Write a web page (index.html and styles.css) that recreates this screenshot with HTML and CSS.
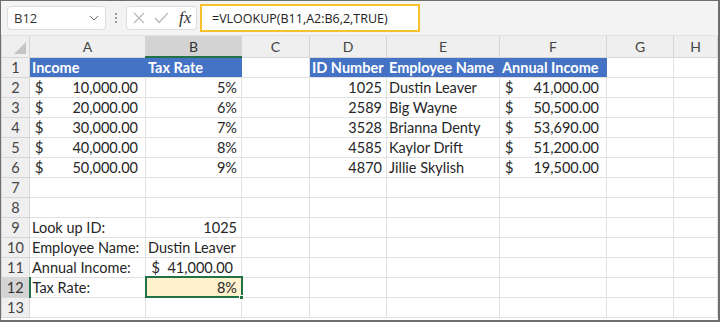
FILE: index.html
```html
<!DOCTYPE html>
<html lang="en">

<head>
    <meta charset="UTF-8">
    <title>VLOOKUP Tax Rate</title>
    <link rel="stylesheet" href="styles.css">
</head>

<body>
    <div class="window">
        <div class="toolbar">
            <div class="name-box">
                <span>B12</span>
                <svg class="chevron" width="10" height="6" viewBox="0 0 10 6">
                    <polyline points="1,1 5,5 9,1" fill="none" stroke="#666" stroke-width="1"/>
                </svg>
            </div>
            <div class="grip"><i></i><i></i><i></i></div>
            <div class="fn-box">
                <svg width="12" height="12" viewBox="0 0 12 12">
                    <path d="M1 1 L11 11 M11 1 L1 11" stroke="#b8b8b8" stroke-width="1.2"/>
                </svg>
                <svg width="15" height="12" viewBox="0 0 15 12">
                    <polyline points="1,6 5,10.5 14,1" fill="none" stroke="#b8b8b8" stroke-width="1.2"/>
                </svg>
                <span class="fx">fx</span>
            </div>
            <div class="formula-bar">
                <span class="formula">=VLOOKUP(B11,A2:B6,2,TRUE)</span>
            </div>
        </div>

        <table class="sheet">
            <colgroup>
                <col style="width:28px">
                <col style="width:116px">
                <col style="width:96px">
                <col style="width:68px">
                <col style="width:77px">
                <col style="width:113px">
                <col style="width:107px">
                <col style="width:67px">
                <col>
            </colgroup>
            <tr class="col-heads">
                <th class="corner"><span class="tri"></span></th>
                <th>A</th><th class="sel-col">B</th><th>C</th><th>D</th><th>E</th><th>F</th><th>G</th><th>H</th>
            </tr>
            <tr>
                <th>1</th>
                <td class="hd">Income</td><td class="hd">Tax Rate</td><td></td>
                <td class="hd">ID Number</td><td class="hd">Employee Name</td><td class="hd">Annual Income</td><td></td><td></td>
            </tr>
            <tr>
                <th>2</th>
                <td><div class="acct"><span>$</span><span>10,000.00</span></div></td><td class="num">5%</td><td></td>
                <td class="num">1025</td><td>Dustin Leaver</td><td><div class="acct"><span>$</span><span>41,000.00</span></div></td><td></td><td></td>
            </tr>
            <tr>
                <th>3</th>
                <td><div class="acct"><span>$</span><span>20,000.00</span></div></td><td class="num">6%</td><td></td>
                <td class="num">2589</td><td>Big Wayne</td><td><div class="acct"><span>$</span><span>50,500.00</span></div></td><td></td><td></td>
            </tr>
            <tr>
                <th>4</th>
                <td><div class="acct"><span>$</span><span>30,000.00</span></div></td><td class="num">7%</td><td></td>
                <td class="num">3528</td><td>Brianna Denty</td><td><div class="acct"><span>$</span><span>53,690.00</span></div></td><td></td><td></td>
            </tr>
            <tr>
                <th>5</th>
                <td><div class="acct"><span>$</span><span>40,000.00</span></div></td><td class="num">8%</td><td></td>
                <td class="num">4585</td><td>Kaylor Drift</td><td><div class="acct"><span>$</span><span>51,200.00</span></div></td><td></td><td></td>
            </tr>
            <tr>
                <th>6</th>
                <td><div class="acct"><span>$</span><span>50,000.00</span></div></td><td class="num">9%</td><td></td>
                <td class="num">4870</td><td>Jillie Skylish</td><td><div class="acct"><span>$</span><span>19,500.00</span></div></td><td></td><td></td>
            </tr>
            <tr>
                <th>7</th>
                <td></td><td></td><td></td><td></td><td></td><td></td><td></td><td></td>
            </tr>
            <tr>
                <th>8</th>
                <td></td><td></td><td></td><td></td><td></td><td></td><td></td><td></td>
            </tr>
            <tr>
                <th>9</th>
                <td>Look up ID:</td><td class="num">1025</td><td></td><td></td><td></td><td></td><td></td><td></td>
            </tr>
            <tr>
                <th>10</th>
                <td>Employee Name:</td><td>Dustin Leaver</td><td></td><td></td><td></td><td></td><td></td><td></td>
            </tr>
            <tr>
                <th>11</th>
                <td>Annual Income:</td><td class="num money">$&nbsp; 41,000.00</td><td></td><td></td><td></td><td></td><td></td><td></td>
            </tr>
            <tr>
                <th class="sel-row">12</th>
                <td>Tax Rate:</td><td class="num active">8%<span class="handle"></span></td><td></td><td></td><td></td><td></td><td></td><td></td>
            </tr>
            <tr>
                <th>13</th>
                <td></td><td></td><td></td><td></td><td></td><td></td><td></td><td></td>
            </tr>
        </table>
    </div>
</body>

</html>
```

FILE: styles.css
```css
* {
    margin: 0;
    padding: 0;
    box-sizing: border-box;
}

body {
    font-family: 'Lato', sans-serif;
    background: white;
    color: #262626;
}

.window {
    width: 720px;
    height: 322px;
    border: 2px solid #6f6f6f;
    border-top-width: 1px;
    border-left-width: 1px;
    overflow: hidden;
    background: white;
}

/* Toolbar */
.toolbar {
    height: 35px;
    background: #f3f3f3;
    display: flex;
    align-items: center;
    padding: 0 4px 0 6px;
    border-bottom: 1px solid #e2e2e2;
}

.name-box {
    width: 99px;
    height: 24px;
    background: white;
    border: 1px solid #dcdcdc;
    border-radius: 4px;
    display: flex;
    align-items: center;
    justify-content: space-between;
    padding: 0 6px 0 6px;
    font-family: 'Open Sans', sans-serif;
    font-size: 13px;
    color: #333;
}

.grip {
    width: 20px;
    display: flex;
    flex-direction: column;
    align-items: center;
    gap: 2px;
}

.grip i {
    width: 2px;
    height: 2px;
    background: #9a9a9a;
}

.fn-box {
    width: 71px;
    height: 24px;
    background: white;
    border: 1px solid #dcdcdc;
    border-radius: 4px;
    display: flex;
    align-items: center;
    gap: 9px;
    padding-left: 6px;
}

.fx {
    font-family: 'Liberation Serif', serif;
    font-style: italic;
    font-size: 17px;
    color: #333;
    margin-left: 1px;
}

.formula-bar {
    flex: 1;
    margin-left: 3px;
    height: 28px;
    display: flex;
    align-items: center;
}

.formula {
    width: 220px;
    height: 28px;
    border: 2px solid #f5c12e;
    background: white;
    padding-left: 10px;
    display: flex;
    align-items: center;
    font-family: 'Open Sans', sans-serif;
    font-size: 12.5px;
    color: #222;
}

/* Sheet */
.sheet {
    border-collapse: collapse;
    table-layout: fixed;
    width: 717px;
    font-size: 14.5px;
}

.sheet td,
.sheet th {
    height: 20px;
    border: 1px solid #e1e1e1;
    padding: 0 4px 0 2px;
    white-space: nowrap;
    overflow: visible;
    font-weight: normal;
}

.sheet tr:first-child th {
    border-top: none;
}

.sheet th {
    background: #efefef;
    color: #444;
    text-align: center;
    border-color: #d6d6d6;
    padding: 0;
}

.col-heads th {
    height: 21px;
    font-size: 14px;
    color: #444;
}

.corner {
    position: relative;
}

.corner .tri {
    position: absolute;
    right: 3px;
    bottom: 3px;
    width: 0;
    height: 0;
    border-left: 12px solid transparent;
    border-bottom: 12px solid #c4c4c4;
}

.sheet th.sel-col {
    background: #d3d3d3;
    border-bottom: 2px solid #217346;
    color: #333;
}

.sheet th.sel-row {
    background: #d3d3d3;
    border-right: 2px solid #217346;
    color: #333;
}

.sheet td.hd {
    background: #4472c4;
    color: white;
    font-weight: bold;
    border-color: #4472c4;
    border-bottom-color: #e1e1e1;
}

.num {
    text-align: right;
}

.sheet td.money {
    padding-right: 8px;
}

.acct {
    display: flex;
    justify-content: space-between;
    padding: 0 3px 0 3px;
}

.sheet td.active {
    position: relative;
    background: #fff2cc;
    outline: 2px solid #217346;
    outline-offset: -1px;
}

.handle {
    position: absolute;
    right: -3px;
    bottom: -3px;
    width: 5px;
    height: 5px;
    background: #217346;
    border: 1px solid white;
}
```
